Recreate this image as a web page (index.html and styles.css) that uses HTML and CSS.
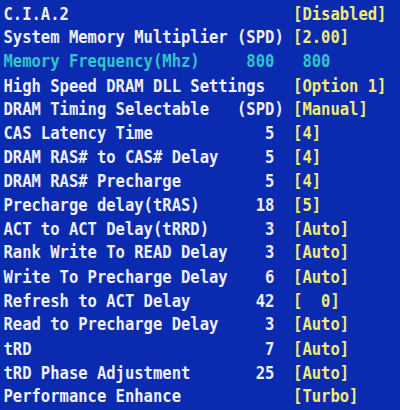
FILE: index.html
```html
<!DOCTYPE html>
<html lang="en">
<head>
    <meta charset="UTF-8">
    <meta name="viewport" content="width=device-width, initial-scale=1.0">
    <title>DRAM Timing</title>
    <link rel="stylesheet" href="styles.css">
</head>
<body>
    <div class="screen">
        <div class="row"><span class="name">C.I.A.2</span><span class="mid"></span><span></span><span class="val">[Disabled]</span></div>
        <div class="row"><span class="name">System Memory Multiplier</span><span class="mid tag">(SPD)</span><span></span><span class="val">[2.00]</span></div>
        <div class="row info"><span class="name">Memory Frequency(Mhz)</span><span class="mid num">800</span><span></span><span class="val"> 800</span></div>
        <div class="row"><span class="name">High Speed DRAM DLL Settings</span><span class="mid"></span><span></span><span class="val">[Option 1]</span></div>
        <div class="row"><span class="name">DRAM Timing Selectable</span><span class="mid tag">(SPD)</span><span></span><span class="val">[Manual]</span></div>
        <div class="row"><span class="name">CAS Latency Time</span><span class="mid num">5</span><span></span><span class="val">[4]</span></div>
        <div class="row"><span class="name">DRAM RAS# to CAS# Delay</span><span class="mid num">5</span><span></span><span class="val">[4]</span></div>
        <div class="row"><span class="name">DRAM RAS# Precharge</span><span class="mid num">5</span><span></span><span class="val">[4]</span></div>
        <div class="row"><span class="name">Precharge delay(tRAS)</span><span class="mid num">18</span><span></span><span class="val">[5]</span></div>
        <div class="row"><span class="name">ACT to ACT Delay(tRRD)</span><span class="mid num">3</span><span></span><span class="val">[Auto]</span></div>
        <div class="row"><span class="name">Rank Write To READ Delay</span><span class="mid num">3</span><span></span><span class="val">[Auto]</span></div>
        <div class="row"><span class="name">Write To Precharge Delay</span><span class="mid num">6</span><span></span><span class="val">[Auto]</span></div>
        <div class="row"><span class="name">Refresh to ACT Delay</span><span class="mid num">42</span><span></span><span class="val">[  0]</span></div>
        <div class="row"><span class="name">Read to Precharge Delay</span><span class="mid num">3</span><span></span><span class="val">[Auto]</span></div>
        <div class="row"><span class="name">tRD</span><span class="mid num">7</span><span></span><span class="val">[Auto]</span></div>
        <div class="row"><span class="name">tRD Phase Adjustment</span><span class="mid num">25</span><span></span><span class="val">[Auto]</span></div>
        <div class="row"><span class="name">Performance Enhance</span><span class="mid"></span><span></span><span class="val">[Turbo]</span></div>
    </div>
</body>
</html>
```

FILE: styles.css
```css
html, body {
    margin: 0;
    padding: 0;
    background-color: #0a2bb0;
}
body {
    min-height: 410px;
}
/* BIOS text grid: ~9.35px cells, glyphs stretched to 24px rows */
.screen {
    width: 400px;
    padding: 1.7px 0 0 3.5px;
    box-sizing: border-box;
    font-family: "DejaVu Sans Mono", "Liberation Mono", monospace;
    font-weight: bold;
    font-size: 15.53px;
    line-height: 20.66px;
    color: #eef0f8;
    transform: scaleY(1.159);
    transform-origin: 0 0;
}
.row {
    display: grid;
    grid-template-columns: 25ch 5ch 1ch auto;
    white-space: pre;
}
.mid {
    text-align: right;
}
.mid.num {
    padding-right: 1ch;
}
.val {
    color: #f2ea78;
}
.info, .info .val {
    color: #2ec6c8;
}
```
